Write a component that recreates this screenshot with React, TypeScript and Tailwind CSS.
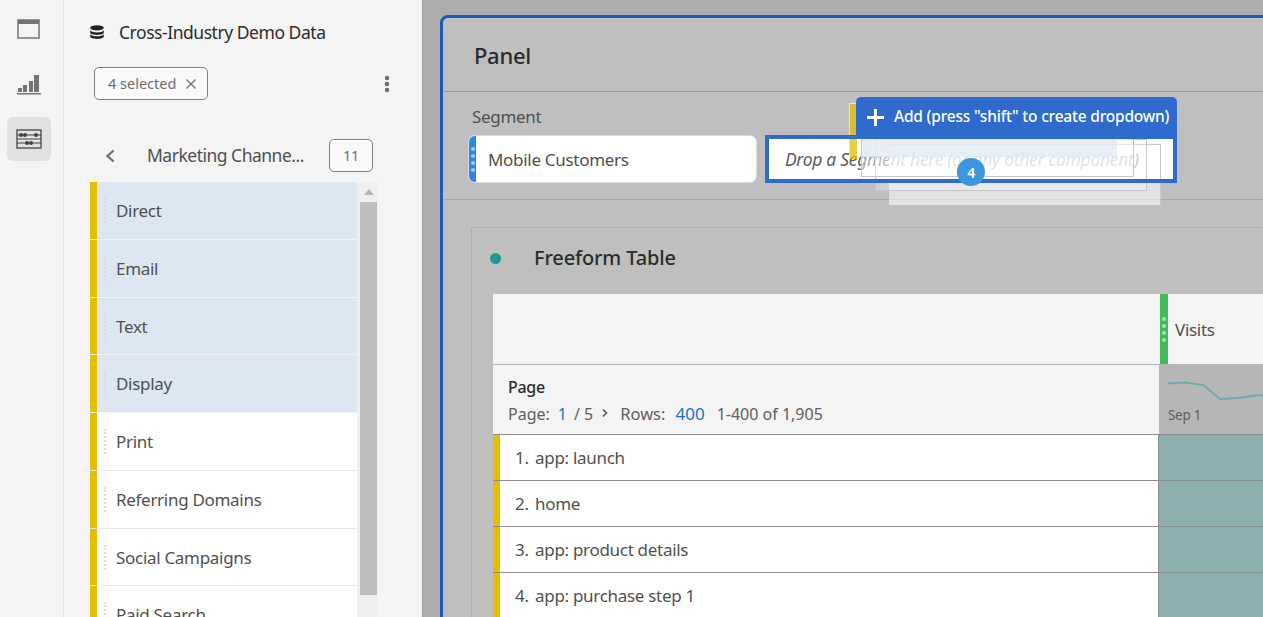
const sans = { fontFamily: '"Noto Sans", sans-serif' };

const channels = [
  { name: "Direct", selected: true },
  { name: "Email", selected: true },
  { name: "Text", selected: true },
  { name: "Display", selected: true },
  { name: "Print", selected: false },
  { name: "Referring Domains", selected: false },
  { name: "Social Campaigns", selected: false },
  { name: "Paid Search", selected: false },
];

const pages = ["app: launch", "home", "app: product details", "app: purchase step 1"];

const Rail = () => (
  <div className="w-[64px] h-full shrink-0 border-r border-[#e1e1e1] flex flex-col items-start pl-[7px] pt-[7px]">
    <div className="w-[44px] h-[44px] flex items-center justify-center">
      <svg width="24" height="20" viewBox="0 0 24 20">
        <rect x="1" y="1" width="21" height="18" fill="none" stroke="#747474" strokeWidth="1.5" />
        <rect x="1" y="1" width="21" height="4" fill="#747474" />
      </svg>
    </div>
    <div className="w-[44px] h-[44px] mt-[11px] flex items-center justify-center">
      <svg width="24" height="24" viewBox="0 0 24 24">
        <rect x="1" y="16" width="4" height="4" fill="#747474" />
        <rect x="6" y="13" width="4" height="7" fill="#747474" />
        <rect x="12" y="9" width="4" height="11" fill="#747474" />
        <rect x="17" y="3" width="5" height="17" fill="#747474" />
        <rect x="0" y="21" width="24" height="1.5" fill="#747474" />
      </svg>
    </div>
    <div className="w-[44px] h-[44px] mt-[11px] rounded-md bg-[#e1e1e1] flex items-center justify-center">
      <svg width="26" height="20" viewBox="0 0 26 20">
        <rect x="1" y="1" width="24" height="18" fill="none" stroke="#444" strokeWidth="1.3" />
        <path d="M1 6h24M1 14h24M1 10h24" stroke="#444" strokeWidth="1" />
        <circle cx="5" cy="6" r="2" fill="#444" />
        <circle cx="9" cy="6" r="2" fill="#444" />
        <circle cx="20" cy="6" r="2" fill="#444" />
        <circle cx="11" cy="14" r="2" fill="#444" />
        <circle cx="15" cy="14" r="2" fill="#444" />
      </svg>
    </div>
  </div>
);

const ChannelRow = ({ name, selected }: { name: string; selected: boolean }) => (
  <div className={`h-[57.75px] flex border-b ${selected ? "bg-[#dde7f2] border-[#f4f4f4]" : "bg-white border-[#e8e8e8]"}`}>
    <div className="w-[7px] bg-[#e2bf00] shrink-0" />
    <div className="w-[2px] h-[25px] ml-[7px] mt-[16px] border-l-2 border-dotted border-[#dcdcdc]" />
    <span className="ml-[10px] mt-[17px] text-[17px] leading-[24px] text-[#505050]">{name}</span>
  </div>
);

const Sidebar = () => (
  <div className="w-[358px] h-full shrink-0 bg-[#f4f4f4] pl-[26px] flex flex-col">
    <div className="flex items-center h-[24px] mt-[20px]">
      <svg width="14" height="14" viewBox="0 0 14 14">
        <ellipse cx="7" cy="2.800" rx="6.800" ry="2.600" fill="#222" />
        <path d="M0.200 5.200c1 1.600 3.600 2.200 6.800 2.200s5.800-.6 6.800-2.200v2.400c0 1.400-3 2.400-6.800 2.400s-6.800-1-6.800-2.400z" fill="#222" />
        <path d="M0.200 9.200c1 1.400 3.600 2 6.800 2s5.800-.6 6.800-2v2.400c0 1.300-3 2.400-6.800 2.400s-6.800-1.100-6.800-2.400z" fill="#222" />
      </svg>
      <span className="ml-[15px] text-[17.5px] tracking-[-0.46px] text-[#2c2c2c]">Cross-Industry Demo Data</span>
    </div>
    <div className="flex items-center mt-[23px] ml-[4px] w-[296px] justify-between">
      <div className="w-[114px] h-[33px] rounded-[5px] border border-[#808080] bg-[#fafafa] flex items-center pl-[13px] text-[14.5px] tracking-normal text-[#6e6e6e]">
        4 selected
        <svg className="ml-[9px]" width="12" height="12" viewBox="0 0 12 12">
          <path d="M1.500 1.500l9 9M10.500 1.500l-9 9" stroke="#747474" strokeWidth="1.400" />
        </svg>
      </div>
      <svg width="6" height="18" viewBox="0 0 6 18">
        <circle cx="3" cy="3" r="2.200" fill="#6e6e6e" />
        <circle cx="3" cy="9" r="2.200" fill="#6e6e6e" />
        <circle cx="3" cy="15" r="2.200" fill="#6e6e6e" />
      </svg>
    </div>
    <div className="flex items-center mt-[39px] h-[33px]">
      <svg className="ml-[14px]" width="12" height="14" viewBox="0 0 12 14">
        <path d="M9.500 1.500L3.500 7l6 5.500" fill="none" stroke="#6e6e6e" strokeWidth="2.200" />
      </svg>
      <span className="ml-[31px] w-[182px] text-[17.5px] tracking-[-0.5px] text-[#505050] whitespace-nowrap">Marketing Channe...</span>
      <div className="w-[44px] h-[33px] rounded-[5px] border border-[#808080] bg-[#fafafa] flex items-center justify-center text-[14.5px] text-[#6e6e6e]">
        11
      </div>
    </div>
    <div className="flex mt-[10px] flex-1 min-h-0">
      <div className="w-[267px] overflow-hidden rounded-tr-[3px]">
        {channels.map((c) => (
          <ChannelRow key={c.name} name={c.name} selected={c.selected} />
        ))}
      </div>
      <div className="w-[21px] bg-[#efefef] pl-[3px] pr-[1px]">
        <div className="h-[20px] flex items-center justify-center">
          <div className="w-0 h-0 border-x-[5px] border-x-transparent border-b-[6px] border-b-[#b4b4b4]" />
        </div>
        <div className="w-[17px] h-[393px] bg-[#bdbdbd]" />
      </div>
    </div>
  </div>
);

const DragOverlay = () => (
  <>
    <div className="absolute left-[849px] top-[103px] w-[8px] h-[56px] bg-[#e2bf00]/75 border-t border-l border-[#e4e4e4]" />
    <div className="absolute left-[889px] top-[144px] w-[272px] h-[61px] bg-white/55 border-t border-r border-[#c8c8c8]" />
    <div className="absolute left-[875px] top-[139px] w-[272px] h-[52px] bg-white/25 border border-[#c8c8c8]" />
    <div className="absolute left-[861px] top-[135px] w-[273px] h-[42px] bg-white/45 border border-[#c8c8c8]">
      <div className="w-[255px] h-[21px] bg-[#dde7f2]/70" />
    </div>
  </>
);

const DropZone = () => (
  <div className="w-[412px] h-[48px] ml-[8px] border-[4px] border-[#2f6bcc] bg-white flex items-center pl-[16px] pt-[1px] text-[17.5px] italic text-[#5e5e5e] whitespace-nowrap">
    Drop a Segment here (or any other component)
  </div>
);

const TableArea = () => (
  <div className="ml-[28px] mt-[27px] border-l border-t border-[#aeaeae] pl-[21px]">
    <div className="flex items-center h-[60px] -ml-[21px] pl-[18px]">
      <div className="w-[11px] h-[11px] rounded-full bg-[#1f9797]" />
      <span className="ml-[33px] text-[20px] tracking-[-0.15px] font-medium text-[#2c2c2c]">Freeform Table</span>
    </div>
    <div className="mt-[6px]">
      <div className="flex h-[71px] bg-[#f4f4f4] border-b border-[#b4b4b4]">
        <div className="w-[667px] shrink-0" />
        <div className="w-[8px] shrink-0 bg-[#44b85c] flex flex-col items-center justify-center gap-[3px]">
          {[0, 1, 2, 3].map((i) => (
            <div key={i} className="w-[4px] h-[4px] rounded-full bg-[#a3e0ae]" />
          ))}
        </div>
        <span className="ml-[7px] mt-[24px] text-[17px] leading-[24px] text-[#505050]">Visits</span>
      </div>
      <div className="flex h-[70px] border-b border-[#8e8e8e]">
        <div className="w-[666px] shrink-0 bg-[#f4f4f4] pl-[15px] pt-[11px]">
          <div className="text-[16px] leading-[22px] font-medium text-[#2c2c2c]">Page</div>
          <div className="flex items-center h-[26px] mt-[3px] text-[16px] tracking-normal text-[#606060] whitespace-nowrap">
            Page:
            <span className="ml-[8px] text-[#1e6fd0]">1</span>
            <span className="ml-[7px]">/ 5</span>
            <svg className="ml-[8px] mb-[3px]" width="8" height="10" viewBox="0 0 8 10">
              <path d="M2 1.500L5.500 5 2 8.500" fill="none" stroke="#505050" strokeWidth="1.500" />
            </svg>
            <span className="ml-[11px] text-[16.5px]">Rows:</span>
            <span className="ml-[10px] text-[17px] text-[#1e6fd0]">400</span>
            <span className="ml-[12px]">1-400 of 1,905</span>
          </div>
        </div>
        <div className="flex-1 bg-[#b6b6b6]">
          <svg className="mt-[13px] ml-[9px]" width="100" height="24" viewBox="0 0 100 24">
            <path d="M0 5.500L17 4.500 35 7 52 21 70 20 88 17.500 100 17" fill="none" stroke="#6fa9ad" strokeWidth="2" />
          </svg>
          <div className="mt-[3px] ml-[9px] text-[13.5px] leading-[20px] text-[#5e5e5e]">Sep 1</div>
        </div>
      </div>
      {pages.map((p, i) => (
        <div key={p} className="flex h-[46px] border-b border-[#8e8e8e]">
          <div className="w-[7px] shrink-0 bg-[#e2bf00]" />
          <div className="w-[659px] shrink-0 bg-white flex items-center text-[17px] text-[#505050] border-r border-[#8e8e8e] pl-[15px]">
            <span className="w-[13px] text-right">{i + 1}.</span>
            <span className="ml-[7px]">{p}</span>
          </div>
          <div className="flex-1 bg-[#8fb0b0]" />
        </div>
      ))}
    </div>
  </div>
);

export default function App() {
  return (
    <div className="w-[1263px] h-[617px] overflow-hidden flex bg-[#f4f4f4] relative tracking-[-0.3px]" style={sans}>
      <Rail />
      <Sidebar />
      <div className="flex-1 min-w-0 h-full bg-[#adadad] border-l border-[#a0a0a0] pl-[17px] pt-[15px] overflow-hidden">
        <div className="w-[900px] h-[700px] bg-[#bfbfbf] border-[3px] border-[#1b5ab5] rounded-tl-[8px]">
          <div className="h-[74px] border-b border-[#989898] pl-[31px] pt-[20px] text-[22px] leading-[34px] font-medium text-[#2c2c2c]">
            Panel
          </div>
          <div className="h-[108px] border-b border-[#a8a8a8] pl-[25px]">
            <div className="text-[17px] leading-[24px] pt-[13px] h-[43px] pl-[4px] text-[#505050]">Segment</div>
            <div className="flex">
              <div className="w-[289px] h-[48px] bg-white border border-[#dcdcdc] rounded-[7px] overflow-hidden flex items-center">
                <div className="w-[7px] h-full bg-[#2f86ea] flex flex-col items-center justify-center gap-[3px]">
                  {[0, 1, 2, 3].map((i) => (
                    <div key={i} className="w-[4px] h-[4px] rounded-full bg-[#a8cdf7]" />
                  ))}
                </div>
                <span className="ml-[12px] pt-[1px] text-[17px] text-[#505050]">Mobile Customers</span>
              </div>
              <DropZone />
            </div>
          </div>
          <TableArea />
        </div>
      </div>
      <DragOverlay />
      <div className="absolute left-[765px] top-[135px] w-[412px] h-[48px] border-[4px] border-[#2f6bcc]" />
      <div className="absolute left-[856px] top-[97px] w-[321px] h-[38px] bg-[#2f6bcc] rounded-t-[5px] flex items-center pt-[2px] text-white text-[15.5px] tracking-[-0.2px] font-medium whitespace-nowrap">
        <svg className="ml-[10px]" width="19" height="19" viewBox="0 0 19 19">
          <path d="M9.500 1v17M1 9.500h17" stroke="#fff" strokeWidth="3" />
        </svg>
        <span className="ml-[9px]">Add (press "shift" to create dropdown)</span>
      </div>
      <div className="absolute left-[957px] top-[158px] w-[28px] h-[28px] rounded-full bg-[#3d97dc] flex items-center justify-center text-white text-[14px] font-semibold">
        4
      </div>
    </div>
  );
}
